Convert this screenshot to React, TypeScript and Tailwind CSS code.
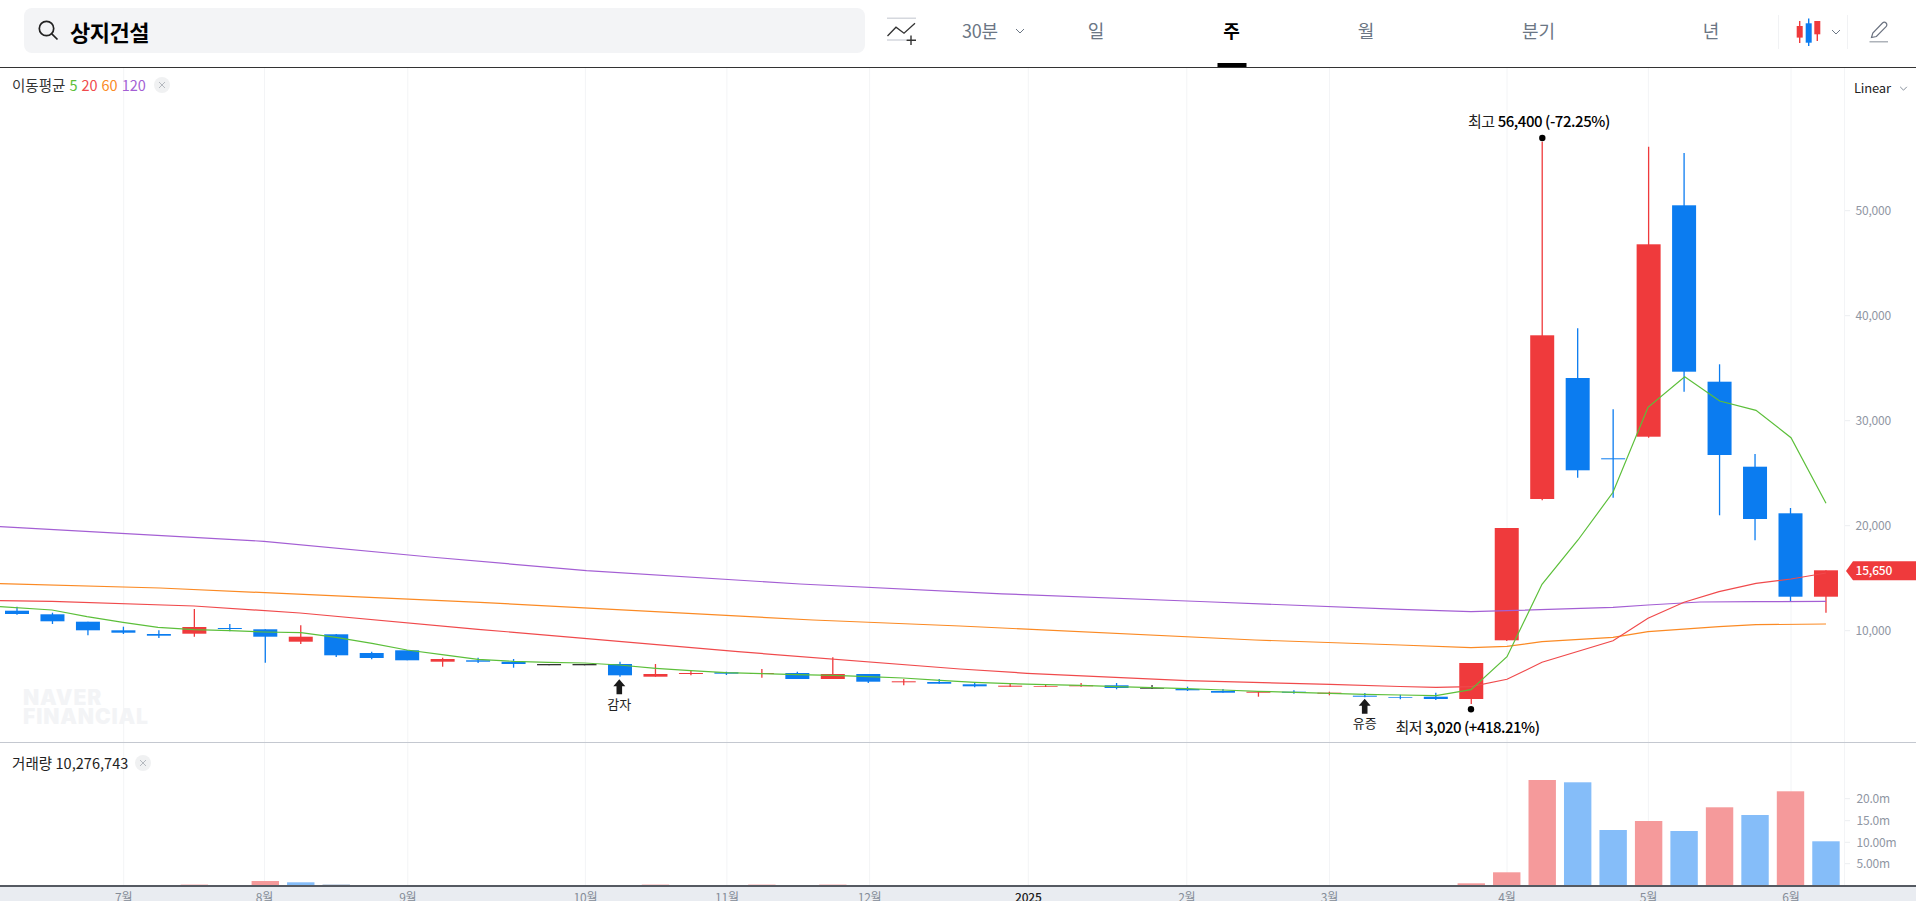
const RED = '#ef3a3c';
const BLUE = '#0b7cf0';
const DARK = '#333333';

// one row: index, color, body top, body bottom, wick top, wick bottom (page px)
const candles: [number, string, number, number, number, number][] = [
  [0, BLUE, 610.7, 614, 606.7, 614.7],
  [1, BLUE, 614.3, 621.3, 612.7, 624],
  [2, BLUE, 621.7, 630.3, 621.7, 635.3],
  [3, BLUE, 630.3, 632.7, 626.7, 634],
  [4, BLUE, 634, 635.7, 630.3, 638],
  [5, RED, 627, 633.7, 609, 636.7],
  [6, BLUE, 628, 629, 624, 631.3],
  [7, BLUE, 629.3, 636.7, 629.3, 662.7],
  [8, RED, 636.7, 641.7, 625.3, 644],
  [9, BLUE, 634.3, 655.3, 634, 657],
  [10, BLUE, 653, 658, 651.7, 659.3],
  [11, BLUE, 650.3, 660.3, 650.3, 660.3],
  [12, RED, 659, 661.7, 657.7, 666.7],
  [13, BLUE, 660.3, 661.7, 657.7, 663],
  [14, BLUE, 661.7, 664, 659, 667.7],
  [15, DARK, 664, 665.3, 664, 665.3],
  [16, DARK, 664, 665.3, 664, 665.3],
  [17, BLUE, 664, 675.3, 661.7, 676.7],
  [18, RED, 674, 676.7, 664, 676.7],
  [19, RED, 673, 674, 670.7, 675.3],
  [20, BLUE, 672.3, 673.7, 671.7, 675],
  [21, RED, 673, 674, 669, 677.7],
  [22, BLUE, 673, 679, 671.7, 679],
  [23, RED, 674, 679, 657.3, 679],
  [24, BLUE, 674, 681.7, 674, 683],
  [25, RED, 681.3, 682.3, 679, 685.3],
  [26, BLUE, 682, 683.7, 679, 683.7],
  [27, BLUE, 684.3, 686.3, 682.7, 687.3],
  [28, RED, 685.7, 686.7, 683.3, 687],
  [29, RED, 686, 686.7, 684.3, 687],
  [30, RED, 685.3, 686.3, 683, 686.7],
  [31, BLUE, 685.3, 688, 683, 689.3],
  [32, DARK, 688.3, 689, 685, 689],
  [33, BLUE, 689, 690.3, 686.7, 691],
  [34, BLUE, 691, 692.7, 689, 692.7],
  [35, RED, 691.7, 692.7, 691.7, 696.7],
  [36, BLUE, 691.7, 692.7, 690.3, 693.7],
  [37, RED, 692.7, 693.7, 691.7, 695.3],
  [38, BLUE, 695.7, 696.7, 693, 697.3],
  [39, BLUE, 697, 697.7, 694.7, 699.3],
  [40, BLUE, 696.7, 699, 692.7, 700],
  [41, RED, 663, 699, 663, 704],
  [42, RED, 528, 640.3, 528, 641],
  [43, RED, 335.3, 499, 141.7, 500.3],
  [44, BLUE, 378, 470.3, 328.3, 477.7],
  [45, BLUE, 458.3, 459.3, 409.3, 497.7],
  [46, RED, 244.3, 436.7, 146.7, 437.7],
  [47, BLUE, 205.3, 371.7, 153, 391.7],
  [48, BLUE, 381.7, 455, 364.3, 515.3],
  [49, BLUE, 466.7, 519, 454, 540.3],
  [50, BLUE, 513.3, 596.7, 508, 601.7],
  [51, RED, 570.3, 596.7, 570.3, 612.7],
];

const candleX = (i: number) => 17 + 35.47 * i;

const ma5 = '0,606.7 52,610 87,616.7 123,622.3 158,627.3 194,629.7 230,630.7 264,632 301,632.7 336,637.3 372,643.3 407,650 442,654.7 478,659.3 513.6,661.3 548,662.3 584.5,663 619,665 655.7,668.3 690.7,670.7 726,672.7 762,673.7 797,674.7 833,675.3 868,676.7 903,678 940,680.3 975,682.3 1010,683.7 1046,684.7 1081,685.3 1117,686.7 1152,687.7 1187,688.7 1223,690 1258,691.3 1295,692.3 1330,693.3 1365,694.3 1401,695 1436,695.7 1471,689.7 1507,656.7 1542,584.3 1578,540 1613,492.3 1648,407.3 1684.7,376.7 1719.7,401 1756,410.3 1791,437.7 1826,503.3';
const ma20 = '0,600.7 52,601.3 194,606 300,613 478,629.3 584,638.3 738,651.7 960,669 1027,673.3 1187,680.7 1330,684.3 1400,686.5 1436,687.3 1471,686.7 1507,679.3 1542,662.3 1613,640.7 1648,618.3 1684,602.3 1719,591.7 1756,583.3 1791,579 1826,573';
const ma60 = '0,583.7 160,588 480,602.3 813,620 960,626 1255,640 1400,645 1471,647.7 1507,646.3 1542,641.7 1613,637.3 1648,631.7 1719,626.7 1756,624.7 1826,624';
const ma120 = '0,526.6 264,541.3 430,557 586.5,570.6 800,584 1002,593.8 1200,601.5 1400,609.3 1471,611.7 1507,610.7 1613,607.3 1648,605 1700,602 1756,601.7 1826,601.3';

const grid = [123.7, 264.5, 407.8, 585.4, 726.9, 869.6, 1028.3, 1186.8, 1329.5, 1507, 1648.4, 1791];
const months = ['7월', '8월', '9월', '10월', '11월', '12월', '2025', '2월', '3월', '4월', '5월', '6월'];
const priceTicks: [string, number][] = [['50,000', 210.7], ['40,000', 315.7], ['30,000', 420.7], ['20,000', 525.7], ['10,000', 630.7]];
const volumeTicks: [string, number][] = [['20.0m', 798.7], ['15.0m', 820.7], ['10.00m', 842.3], ['5.00m', 863.7]];

const LRED = '#f59a9b';
const LBLUE = '#85bdf9';
const volumes: [number, string, number][] = [
  [5, LRED, 884.6], [7, LRED, 881], [8, LBLUE, 882.3], [9, '#5a7fb0', 884.7], [18, LRED, 884.6], [21, LRED, 884.6], [23, LRED, 884.6],
  [41, LRED, 883.3], [42, LRED, 872.3], [43, LRED, 780], [44, LBLUE, 782.3], [45, LBLUE, 830], [46, LRED, 821],
  [47, LBLUE, 831], [48, LRED, 807.3], [49, LBLUE, 815], [50, LRED, 791.3], [51, LBLUE, 841.3],
];

function Chevron({ className }: { className: string }) {
  return (
    <svg viewBox="0 0 10 6" className={className} fill="none" stroke="#6b7684" strokeWidth="1">
      <path d="M1 1l4 4 4-4" />
    </svg>
  );
}

function CloseDot() {
  return (
    <span className="flex h-4 w-4 items-center justify-center rounded-full bg-[#f0f1f2]">
      <svg viewBox="0 0 8 8" className="h-2 w-2" stroke="#b5b9bf" strokeWidth="1">
        <path d="M1 1l6 6M7 1l-6 6" />
      </svg>
    </span>
  );
}

function Arrow({ x, y }: { x: number; y: number }) {
  return <path d={`M${x} ${y}l6 7h-3.2v8h-5.6v-8h-3.2z`} fill="#1a1a1a" />;
}

function Tab({ label, className, active }: { label: string; className: string; active?: boolean }) {
  return (
    <div className={`relative flex h-full items-center justify-center pb-[6px] ${className}`}>
      <span className={active ? 'text-[18px] font-bold text-black' : 'text-[18px] text-[#6b7684]'}>{label}</span>
      {active && <span className="absolute bottom-0 left-1/2 h-[4px] w-[29px] -translate-x-1/2 bg-black" />}
    </div>
  );
}

export default function App() {
  return (
    <div className="flex h-[901px] w-[1916px] flex-col overflow-hidden bg-white font-['Noto_Sans_CJK_KR','Noto_Sans',sans-serif]">
      <header className="flex h-[68px] shrink-0 items-center border-b-[1.5px] border-[#333333] pl-[24px]">
        <div className="mb-[7px] flex h-[45px] w-[841px] items-center rounded-[8px] bg-[#f3f4f6] pl-[13px]">
          <svg viewBox="0 0 22 22" className="h-[22px] w-[22px]" fill="none" stroke="#222222" strokeWidth="1.7">
            <circle cx="9.5" cy="9.5" r="7.2" />
            <path d="M14.8 14.8L20.5 20.5" />
          </svg>
          <span className="ml-[11px] pt-[2px] text-[22px] font-bold tracking-[-0.5px] text-black">상지건설</span>
        </div>

        <svg viewBox="0 0 30 30" className="mb-[7px] ml-[22px] h-[30px] w-[30px]" fill="none">
          <path d="M0 3.3h29M0 25h19" stroke="#d5d8de" strokeWidth="1.4" />
          <path d="M0.5 21l8.5-8.8 8 6L28 8.3" stroke="#333333" strokeWidth="1.3" />
          <path d="M24 20.5v9.5M19.5 25.3h9.5" stroke="#333333" strokeWidth="1.4" />
        </svg>

        <div className="ml-[45px] flex h-full w-[66px] items-center gap-[17px] pb-[6px]">
          <span className="whitespace-nowrap text-[18px] tracking-[-0.3px] text-[#6b7684]">30분</span>
          <Chevron className="h-[6px] w-[10px] shrink-0" />
        </div>

        <Tab label="일" className="w-[136px]" />
        <Tab label="주" className="w-[135px]" active />
        <Tab label="월" className="w-[134px]" />
        <Tab label="분기" className="w-[211px]" />
        <Tab label="년" className="w-[134px]" />

        <div className="mb-[4px] flex h-[34px] w-[70px] shrink-0 items-center border-x border-[#f1f2f4]">
          <svg viewBox="0 0 26 28" className="ml-[17px] h-[28px] w-[26px] shrink-0" fill="none">
            <path d="M3.7 3v22" stroke={RED} strokeWidth="1.4" />
            <rect x="0.7" y="8" width="6" height="11.6" fill={RED} />
            <path d="M12.7 0.5v27.5" stroke={BLUE} strokeWidth="1.4" />
            <rect x="9.7" y="5.3" width="6" height="19.4" fill={BLUE} />
            <path d="M21.3 3v20" stroke={RED} strokeWidth="1.4" />
            <rect x="18.3" y="3" width="6" height="13.3" fill={RED} />
          </svg>
          <Chevron className="ml-[9px] h-[6px] w-[10px] shrink-0" />
        </div>

        <svg viewBox="0 0 20 22" className="mb-[4px] ml-[21px] h-[22px] w-[20px]" fill="none" stroke="#6b7280" strokeWidth="1.2">
          <path d="M2.5 16.5L3.8 12 13.5 2c1-1 2.6-1 3.6 0s1 2.6 0 3.6L7.4 15.5z" />
          <path d="M0.5 20.8h18.5" stroke="#9aa0a9" />
        </svg>
      </header>

      <section className="relative h-[675px] shrink-0 border-b-[1.5px] border-[#c4c8d0]">
        <svg viewBox="0 68 1916 674" className="absolute inset-0 h-[674px] w-[1916px]">
          {grid.map((x) => (
            <line key={x} x1={x} x2={x} y1="68" y2="742" stroke="#f3f4f6" />
          ))}
          <line x1="1844.5" x2="1844.5" y1="68" y2="742" stroke="#f3f4f6" />
          {priceTicks.map(([label, y]) => (
            <g key={label}>
              <line x1="1845" x2="1850" y1={y} y2={y} stroke="#eceef1" />
              <text x="1855.5" y={y + 4.5} fontSize="12" fill="#8f96a3" letterSpacing="-0.2">{label}</text>
            </g>
          ))}

          {candles.map(([i, color, top, bottom, wickTop, wickBottom]) => {
            const x = candleX(i);
            return (
              <g key={i}>
                <line x1={x} x2={x} y1={wickTop} y2={wickBottom} stroke={color} strokeWidth="1.3" />
                <rect x={x - 12} y={top} width="24" height={bottom - top} fill={color} />
              </g>
            );
          })}

          <polyline points={ma120} fill="none" stroke="#a45fd4" strokeWidth="1.2" />
          <polyline points={ma60} fill="none" stroke="#fb8a24" strokeWidth="1.2" />
          <polyline points={ma20} fill="none" stroke="#f04a4c" strokeWidth="1.2" />
          <polyline points={ma5} fill="none" stroke="#5cbf3a" strokeWidth="1.2" />

          <circle cx="1542.3" cy="138" r="3.2" fill="#000000" />
          <text x="1468" y="126.5" fontSize="15" letterSpacing="-0.45" fill="#222222">
            최고 <tspan fontWeight="500" fill="#000000">56,400 (-72.25%)</tspan>
          </text>
          <circle cx="1471" cy="709.3" r="3.2" fill="#000000" />
          <text x="1395.5" y="732.5" fontSize="15" letterSpacing="-0.5" fill="#222222">
            최저 <tspan fontWeight="500" fill="#000000">3,020 (+418.21%)</tspan>
          </text>

          <Arrow x={619.3} y={679.3} />
          <text x="619.3" y="709" fontSize="13" textAnchor="middle" fill="#222222">감자</text>
          <Arrow x={1364.7} y={698.7} />
          <text x="1364.7" y="727.5" fontSize="13" textAnchor="middle" fill="#222222">유증</text>

          <path d="M1846 571l7-9.7h63v19h-63z" fill={RED} />
          <text x="1855.5" y="574.8" fontSize="12" fontWeight="500" letterSpacing="-0.2" fill="#ffffff">15,650</text>
        </svg>

        <div className="absolute left-[12px] top-[9px] flex items-center gap-[4px] text-[14.5px] leading-[16px] tracking-[0px]">
          <span className="text-[#333333]">이동평균</span>
          <span className="text-[#5cbf3a]">5</span>
          <span className="text-[#f04a4c]">20</span>
          <span className="text-[#fb8a24]">60</span>
          <span className="text-[#a45fd4]">120</span>
          <span className="ml-[4px]"><CloseDot /></span>
        </div>

        <div className="absolute left-[1854px] top-[12px] flex items-center gap-[8px] text-[13px] leading-[16px] tracking-[-0.2px] text-[#222222]">
          <span>Linear</span>
          <Chevron className="h-[5px] w-[9px]" />
        </div>

        <div className="absolute left-[23px] top-[621px] text-[21px] font-black leading-[18.5px] tracking-[0.9px] text-[#f3f4f6] font-['Inter',sans-serif]">
          NAVER<br />FINANCIAL
        </div>
      </section>

      <section className="relative h-[144px] shrink-0 border-b-2 border-[#555a62]">
        <svg viewBox="0 743 1916 142" className="absolute inset-0 h-[142px] w-[1916px]">
          {grid.map((x) => (
            <line key={x} x1={x} x2={x} y1="743" y2="885" stroke="#f3f4f6" />
          ))}
          <line x1="1844.5" x2="1844.5" y1="743" y2="885" stroke="#f3f4f6" />
          {volumes.map(([i, color, top]) => (
            <rect key={i} x={candleX(i) - 13.7} y={top} width="27.4" height={885 - top} fill={color} />
          ))}
          {volumeTicks.map(([label, y]) => (
            <g key={label}>
              <line x1="1845" x2="1850" y1={y} y2={y} stroke="#eceef1" />
              <text x="1856.5" y={y + 4.5} fontSize="12" fill="#8f96a3" letterSpacing="-0.2">{label}</text>
            </g>
          ))}
        </svg>
        <div className="absolute left-[12px] top-[12px] flex items-center gap-[7px] text-[14.5px] leading-[16px] tracking-[0.05px] text-[#222222]">
          <span>거래량 10,276,743</span>
          <CloseDot />
        </div>
      </section>

      <footer className="relative h-[14px] shrink-0 overflow-hidden bg-[#e9ecf1]">
        <svg viewBox="0 887 1916 14" className="absolute inset-0 h-[14px] w-[1916px]">
          {grid.map((x, i) => (
            <text
              key={x}
              x={x}
              y="902"
              fontSize="12"
              textAnchor="middle"
              letterSpacing="-0.2"
              fontWeight={months[i] === '2025' ? 500 : 400}
              fill={months[i] === '2025' ? '#222222' : '#858c98'}
            >
              {months[i]}
            </text>
          ))}
        </svg>
      </footer>
    </div>
  );
}
